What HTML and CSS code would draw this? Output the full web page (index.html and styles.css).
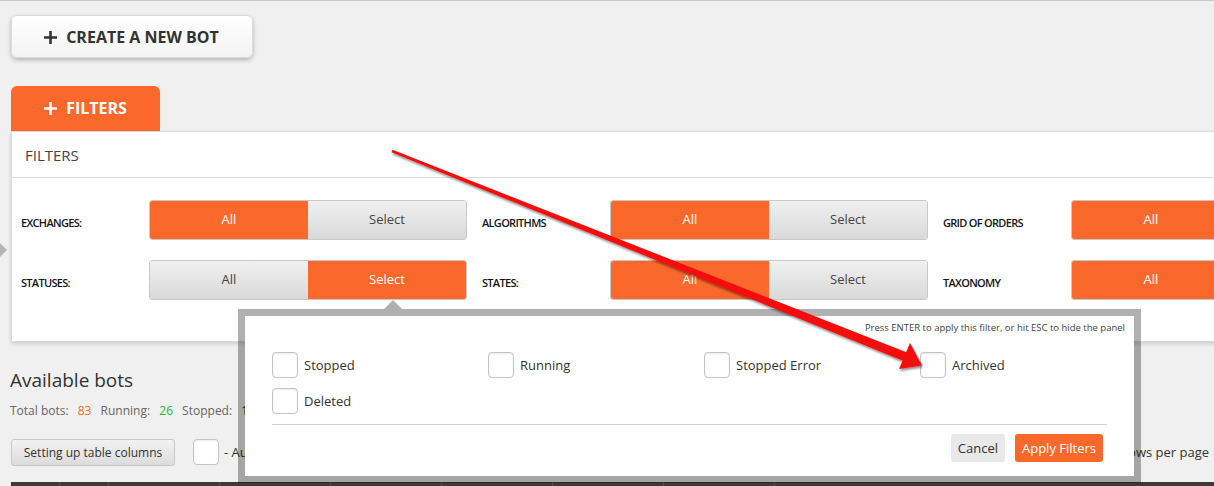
FILE: index.html
```html
<!DOCTYPE html>
<html lang="en">
<head>
    <meta charset="UTF-8">
    <title>Bots</title>
    <link rel="stylesheet" href="styles.css">
</head>
<body>
    <div class="page">
        <button class="create-btn">
            <svg class="plus" width="13" height="13" viewBox="0 0 13 13"><path d="M6.5 0v13M0 6.5h13" stroke="currentColor" stroke-width="2.6"/></svg>
            CREATE A NEW BOT
        </button>

        <div class="tab">
            <svg class="plus" width="13" height="13" viewBox="0 0 13 13"><path d="M6.5 0v13M0 6.5h13" stroke="currentColor" stroke-width="2.6"/></svg>
            FILTERS
        </div>

        <div class="panel">
            <div class="panel-head">FILTERS</div>
            <div class="filter-grid">
                <div class="filter-item">
                    <span class="filter-label">EXCHANGES:</span>
                    <div class="btn-group"><span class="on">All</span><span>Select</span></div>
                </div>
                <div class="filter-item">
                    <span class="filter-label">ALGORITHMS</span>
                    <div class="btn-group"><span class="on">All</span><span>Select</span></div>
                </div>
                <div class="filter-item">
                    <span class="filter-label">GRID OF ORDERS</span>
                    <div class="btn-group"><span class="on">All</span><span>Select</span></div>
                </div>
                <div class="filter-item">
                    <span class="filter-label">STATUSES:</span>
                    <div class="btn-group"><span>All</span><span class="on">Select</span></div>
                </div>
                <div class="filter-item">
                    <span class="filter-label">STATES:</span>
                    <div class="btn-group"><span class="on">All</span><span>Select</span></div>
                </div>
                <div class="filter-item">
                    <span class="filter-label">TAXONOMY</span>
                    <div class="btn-group"><span class="on">All</span><span>Select</span></div>
                </div>
            </div>
        </div>

        <h2 class="title">Available bots</h2>
        <div class="stats">
            Total bots: <b class="orange">83</b>
            Running: <b class="green">26</b>
            Stopped: <b>15</b>
        </div>

        <div class="toolbar">
            <button class="gray-btn">Setting up table columns</button>
            <span class="check"></span>
            <span class="auto">- Auto refresh</span>
            <span class="per-page">Rows per page</span>
        </div>

        <div class="table-head">
            <span></span><span></span><span></span><span></span><span></span><span></span><span></span><span></span>
        </div>
    </div>

    <div class="side-toggle"></div>

    <div class="popup">
        <p class="hint">Press ENTER to apply this filter, or hit ESC to hide the panel</p>
        <div class="options">
            <label class="option"><span class="check"></span>Stopped</label>
            <label class="option"><span class="check"></span>Running</label>
            <label class="option"><span class="check"></span>Stopped Error</label>
            <label class="option"><span class="check"></span>Archived</label>
            <label class="option"><span class="check"></span>Deleted</label>
        </div>
        <div class="popup-actions">
            <button class="cancel">Cancel</button>
            <button class="apply">Apply Filters</button>
        </div>
    </div>

    <svg class="arrow" width="1214" height="486" viewBox="0 0 1214 486">
        <defs>
            <filter id="shade" x="-5%" y="-5%" width="110%" height="120%">
                <feDropShadow dx="1" dy="2" stdDeviation="1.2" flood-color="#000" flood-opacity="0.45"/>
            </filter>
        </defs>
        <g filter="url(#shade)" fill="#f50d0d">
            <polygon points="391.5,152.3 392.5,149.8 907,352.5 903.5,361"/>
            <polygon points="922,365.5 899,369 910,343"/>
        </g>
    </svg>
</body>
</html>
```

FILE: styles.css
```css
html, body {
    margin: 0;
    height: 486px;
    overflow: hidden;
}

body {
    font-family: "Open Sans", Arial, sans-serif;
    background-color: #f0f0f0;
    border-top: 1px solid #c9c9c9;
    position: relative;
    color: #333;
}

.page {
    padding: 14px 0 0 11px;
    overflow: hidden;
}

.plus {
    display: inline-block;
    margin-right: 5px;
    vertical-align: -1px;
}

.create-btn {
    display: block;
    width: 242px;
    height: 43px;
    border: 1px solid #dcdcdc;
    border-radius: 6px;
    background: linear-gradient(#ffffff, #f3f3f3);
    box-shadow: 0 2px 4px rgba(0, 0, 0, 0.25);
    font-family: inherit;
    font-size: 16px;
    font-weight: 700;
    color: #333;
    text-align: left;
    padding: 0 0 0 32px;
}

.tab {
    margin-top: 28px;
    width: 149px;
    height: 45px;
    box-sizing: border-box;
    padding-left: 33px;
    line-height: 45px;
    background: #fa692b;
    color: #fff;
    font-size: 16px;
    font-weight: 700;
    border-radius: 6px 6px 0 0;
}

.panel {
    width: 1240px;
    height: 211px;
    box-sizing: border-box;
    background: #fff;
    border: 1px solid #dadada;
    box-shadow: 0 2px 4px rgba(0, 0, 0, 0.15);
}

.panel-head {
    height: 45px;
    line-height: 46px;
    padding-left: 13px;
    font-size: 15px;
    color: #444;
    border-bottom: 1px solid #dadada;
}

.filter-grid {
    display: grid;
    grid-template-columns: repeat(3, 446px);
    column-gap: 15px;
    row-gap: 20px;
    padding: 22px 0 0 9px;
}

.filter-item {
    display: flex;
    align-items: center;
}

.filter-label {
    width: 128px;
    padding-top: 4px;
    font-size: 11px;
    font-weight: 600;
    letter-spacing: -0.7px;
    color: #151515;
}

.btn-group {
    display: flex;
    width: 318px;
    height: 40px;
    box-sizing: border-box;
    border: 1px solid #c8c8c8;
    border-radius: 3px;
    overflow: hidden;
}

.btn-group span {
    flex: 1;
    text-align: center;
    line-height: 37px;
    font-size: 13px;
    color: #444;
    background: linear-gradient(#f0f0f0, #d9d9d9);
}

.btn-group span.on {
    background: #fa692b;
    color: #fff;
}

.title {
    margin: 24px 0 0 -1px;
    font-size: 19px;
    font-weight: 400;
    line-height: 28px;
    color: #333;
}

.stats {
    margin: 8px 0 0 -1px;
    font-size: 12px;
    line-height: 18px;
    color: #666;
}

.stats b {
    font-weight: 400;
    margin: 0 6px 0 6px;
    color: #333;
}

.stats .orange {
    color: #fa692b;
}

.stats .green {
    color: #2db52d;
}

.toolbar {
    display: flex;
    align-items: center;
    margin-top: 18px;
    height: 28px;
}

.gray-btn {
    width: 164px;
    height: 27px;
    border: 1px solid #c8c8c8;
    border-radius: 3px;
    background: linear-gradient(#f2f2f2, #dcdcdc);
    font-family: inherit;
    font-size: 12px;
    color: #333;
    padding: 0;
}

.check {
    display: inline-block;
    width: 26px;
    height: 26px;
    box-sizing: border-box;
    border: 1px solid #c4c4c4;
    border-radius: 4px;
    background: #fff;
    box-shadow: inset 0 1px 2px rgba(0, 0, 0, 0.08);
}

.toolbar .check {
    margin-left: 18px;
}

.auto {
    margin-left: 5px;
    font-size: 13px;
}

.per-page {
    margin-left: auto;
    margin-right: 5px;
    font-size: 13px;
}

.table-head {
    display: flex;
    margin-top: 16px;
    height: 20px;
    background: #3a3a3a;
}

.table-head span {
    width: 48px;
    border-right: 1px solid #555;
}

.table-head span:nth-child(n+3) {
    width: 110px;
}

.side-toggle {
    position: absolute;
    left: 0;
    top: 242px;
    border-left: 7px solid #b5b5b5;
    border-top: 7px solid transparent;
    border-bottom: 7px solid transparent;
}

.popup {
    position: absolute;
    left: 238px;
    top: 308px;
    width: 853px;
    height: 160px;
    padding: 0 9px 0 27px;
    border: 7px solid rgba(0, 0, 0, 0.31);
    background: #fff;
    background-clip: padding-box;
}

.popup::before {
    content: "";
    position: absolute;
    left: 139px;
    top: -16px;
    border-left: 9px solid transparent;
    border-right: 9px solid transparent;
    border-bottom: 9px solid #b0b0b0;
}

.hint {
    margin: 5px 0 0;
    text-align: right;
    font-size: 9.5px;
    line-height: 14px;
    color: #444;
}

.options {
    display: grid;
    grid-template-columns: repeat(4, 216px);
    row-gap: 10px;
    margin-top: 17px;
    padding-bottom: 10px;
    border-bottom: 1px solid #d0d0d0;
    width: 835px;
}

.option {
    display: flex;
    align-items: center;
    gap: 6px;
    font-size: 13px;
    color: #333;
}

.popup-actions {
    display: flex;
    justify-content: flex-end;
    gap: 10px;
    width: 831px;
    margin-top: 9px;
}

.popup-actions button {
    height: 28px;
    border: none;
    border-radius: 3px;
    font-family: inherit;
    font-size: 13px;
    padding: 0 7px;
}

.cancel {
    background: #e9e9e9;
    color: #333;
}

.apply {
    background: #fa692b;
    color: #fff;
}

.arrow {
    position: absolute;
    left: 0;
    top: -1px;
    pointer-events: none;
}
```
